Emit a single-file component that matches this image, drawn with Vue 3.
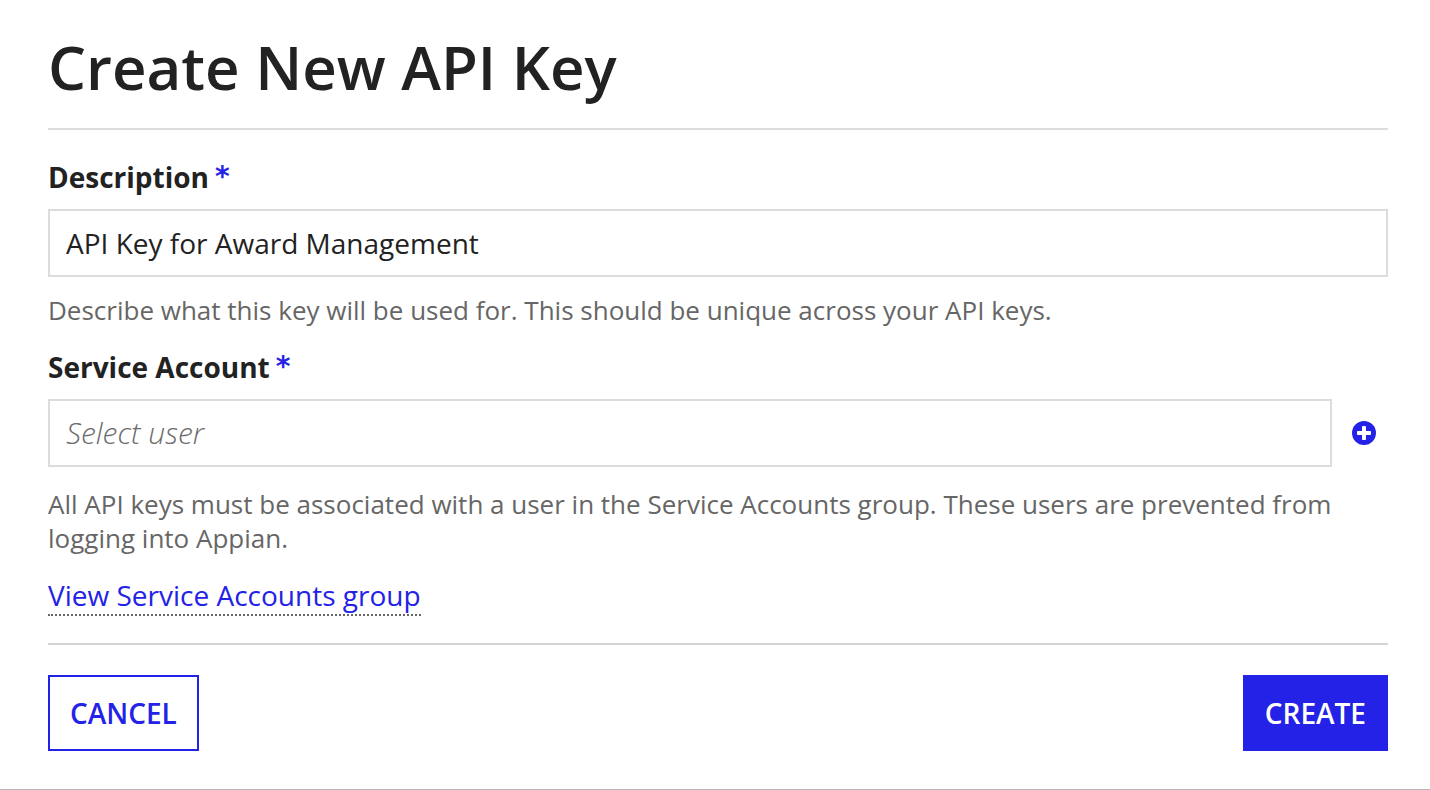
<script setup>
import { ref } from 'vue'

const description = ref('API Key for Award Management')
const account = ref('')
</script>

<template>
  <form class="dialog" @submit.prevent>
    <h1>Create New API Key</h1>
    <div class="body">
      <div class="label-row">
        <label for="description">Description</label>
        <span class="star" aria-hidden="true">*</span>
      </div>
      <input id="description" v-model="description" type="text" required aria-describedby="description-help" />
      <p id="description-help" class="help">Describe what this key will be used for. This should be unique across your API keys.</p>

      <div class="label-row">
        <label for="account">Service Account</label>
        <span class="star" aria-hidden="true">*</span>
      </div>
      <div class="picker">
        <input id="account" v-model="account" type="text" placeholder="Select user" required aria-describedby="account-help" />
        <button type="button" class="add" aria-label="Add service account">
          <svg viewBox="0 0 24 24" width="24" height="24" aria-hidden="true">
            <circle cx="12" cy="12" r="12" fill="#2322e6" />
            <rect x="10" y="5" width="4" height="14" rx="0.8" fill="#fff" />
            <rect x="5" y="10" width="14" height="4" rx="0.8" fill="#fff" />
          </svg>
        </button>
      </div>
      <p id="account-help" class="help account-help">All API keys must be associated with a user in the Service Accounts group. These users are prevented from logging into Appian.</p>
      <a href="#" class="link">View Service Accounts group</a>
    </div>
    <footer>
      <button type="button" class="btn">CANCEL</button>
      <button type="submit" class="btn primary">CREATE</button>
    </footer>
  </form>
</template>

<style>
body {
  background: #fff;
}
</style>

<style scoped>
.dialog {
  box-sizing: border-box;
  padding: 28px 42px 38px 48px;
  border-bottom: 1px solid #b5b5b5;
  font-family: "Open Sans", sans-serif;
  font-size: 28px;
  color: #222;
}
h1 {
  margin: 0;
  padding-bottom: 22px;
  border-bottom: 2px solid #dcdcdc;
  font-size: 60px;
  line-height: 78px;
  font-weight: 600;
}
.body {
  padding: 28px 0 27px;
  border-bottom: 2px solid #d3d3d3;
}
.label-row {
  display: flex;
  gap: 6px;
  margin-bottom: 13px;
  line-height: 38px;
}
label {
  font-weight: 700;
}
.star {
  color: #2322e6;
  font-family: "DejaVu Sans", sans-serif;
  font-weight: 700;
}
input {
  box-sizing: border-box;
  display: block;
  width: 100%;
  height: 68px;
  margin: 0;
  padding: 0 16px;
  border: 2px solid #dcdcdc;
  border-radius: 0;
  background: #fff;
  font: inherit;
  color: #222;
  outline: none;
}
input::placeholder {
  color: #6c6c6c;
  opacity: 1;
  font-size: 30px;
  font-style: italic;
  font-weight: 300;
}
.help {
  margin: 16px 0 21px;
  font-size: 26px;
  line-height: 34px;
  color: #666;
}
.picker {
  display: flex;
  align-items: center;
}
.picker input {
  flex: 1;
}
.add {
  display: flex;
  padding: 0;
  margin: 0 12px 0 20px;
  border: 0;
  background: none;
}
.account-help {
  margin: 20px 0 21px;
}
.link {
  display: inline-block;
  line-height: 38px;
  border-bottom: 2px dotted #666;
  color: #2322e6;
  text-decoration: none;
}
footer {
  display: flex;
  justify-content: space-between;
  padding-top: 30px;
}
.btn {
  height: 76px;
  padding: 0 20px;
  border: 2px solid #2322e6;
  background: #fff;
  color: #2322e6;
  font: inherit;
  font-weight: 600;
}
.primary {
  background: #2322e6;
  color: #fff;
}
</style>
